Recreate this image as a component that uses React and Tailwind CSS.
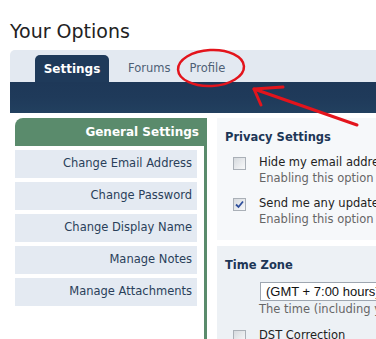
import React from "react";

const sideLinks = [
  "Change Email Address",
  "Change Password",
  "Change Display Name",
  "Manage Notes",
  "Manage Attachments",
];

const Checkbox = ({ checked }) => (
  <div className="w-[13px] h-[13px] shrink-0 border border-[#aab0b7] bg-gradient-to-br from-[#d6dade] to-[#f8f9fa] flex items-center justify-center">
    {checked && (
      <svg width="9" height="9" viewBox="0 0 9 9">
        <path d="M1 4.5 L3.5 7 L8 1.5" fill="none" stroke="#2f4f9c" strokeWidth="1.8" />
      </svg>
    )}
  </div>
);

const CheckRow = ({ checked, label, desc }) => (
  <div className="flex pl-[16px]">
    <div className="pt-[3px]">
      <Checkbox checked={checked} />
    </div>
    <div className="ml-[13px] whitespace-nowrap">
      <div className="leading-[16px] text-[#222]">{label}</div>
      {desc && <div className="leading-[16px] text-[#666]">{desc}</div>}
    </div>
  </div>
);

export default function App() {
  return (
    <div
      className="relative w-full h-[339px] overflow-hidden bg-white text-[11.5px]"
      style={{ fontFamily: '"DejaVu Sans", Verdana, sans-serif' }}
    >
      <h1 className="pl-[10px] pt-[19px] text-[19px] leading-[24px] text-[#222]">Your Options</h1>

      {/* tabs */}
      <div className="mt-[7px] ml-[10px] h-[32px] bg-[#e3e9f1] rounded-tl-[5px] flex items-end pl-[25px]">
        <div className="w-[74px] h-[27px] bg-[#1f3a5a] rounded-t-[5px] flex items-center justify-center font-bold text-white text-[12px]">
          Settings
        </div>
        <div className="h-[27px] flex items-center text-[#4e5f75]">
          <span className="ml-[19px]">Forums</span>
          <span className="ml-[19px]">Profile</span>
        </div>
      </div>
      <div className="ml-[10px] h-[31px] bg-gradient-to-b from-[#1e3858] via-[#1f3a5a] to-[#22405f]" />

      {/* main */}
      <div className="flex ml-[15px] pt-[5px] h-[226px]">
        <div className="w-[192px] shrink-0 flex flex-col">
          <div className="h-[28px] bg-[#5a8b6c] rounded-tl-[8px] flex items-center justify-end pr-[8px] font-bold text-white text-[12px]">
            General Settings
          </div>
          <div className="flex-1 border-r-[3px] border-[#5a8b6c] flex flex-col gap-[4px] pt-[4px]">
            {sideLinks.map((l) => (
              <div
                key={l}
                className="w-[182px] h-[28px] bg-[#e4eaf2] flex items-center justify-end pr-[5px] text-[#2a3f5a]"
              >
                {l}
              </div>
            ))}
          </div>
        </div>

        <div className="ml-[10px] flex-1 min-w-0 flex flex-col overflow-hidden">
          <div className="shrink-0 bg-[#f6f8fa] h-[122px] pt-[11px] pl-[8px]">
            <div className="font-bold text-[#1d3656] leading-[16px]">Privacy Settings</div>
            <div className="mt-[9px] flex flex-col gap-[9px] -ml-[8px]">
              <CheckRow
                label="Hide my email address from other members"
                desc="Enabling this option will hide your email"
              />
              <CheckRow
                checked
                label="Send me any updates sent by administrators"
                desc="Enabling this option will allow you to receive"
              />
            </div>
          </div>
          <div className="shrink-0 mt-[6px] h-[200px] bg-[#edf1f5] pt-[11px] pl-[8px]">
            <div className="font-bold text-[#1d3656] leading-[16px]">Time Zone</div>
            <div
              className="mt-[9px] ml-[35px] h-[19px] w-[200px] border border-[#9ea6b0] bg-white flex items-center pl-[5px] text-[13px] text-[#111] whitespace-nowrap"
              style={{ fontFamily: '"Liberation Sans", Arial, sans-serif' }}
            >
              (GMT + 7:00 hours) Bangkok, Hanoi, Jakarta
            </div>
            <div className="ml-[34px] leading-[16px] text-[#666] whitespace-nowrap">
              The time (including your time zone) is shown
            </div>
            <div className="mt-[10px] -ml-[8px]">
              <CheckRow label="DST Correction" />
            </div>
          </div>
        </div>
      </div>

      {/* red annotation */}
      <svg className="absolute left-0 top-0 pointer-events-none" width="376" height="339">
        <ellipse cx="211" cy="68" rx="33" ry="18" fill="none" stroke="#e3141c" strokeWidth="2.5" transform="rotate(-3 211 68)" />
        <path d="M254 89 L357 125" stroke="#e3141c" strokeWidth="3" fill="none" strokeLinecap="round" />
        <path d="M283 87 L254 89 L261 105" stroke="#e3141c" strokeWidth="3" fill="none" strokeLinecap="round" strokeLinejoin="round" />
      </svg>
    </div>
  );
}
